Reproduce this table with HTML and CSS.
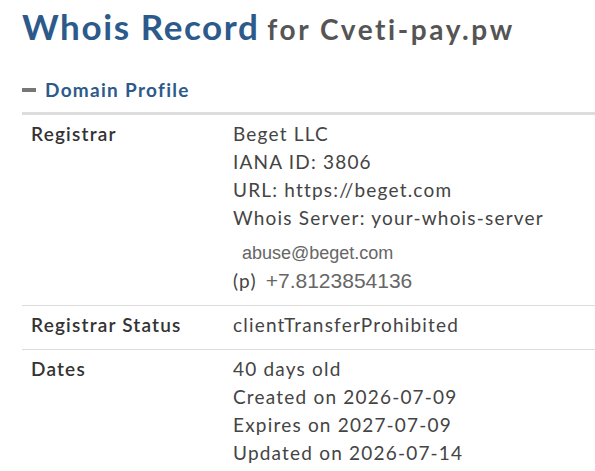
FILE: index.html
```html
<!DOCTYPE html>
<html>
<head>
<meta charset="utf-8">
<link rel="stylesheet" href="styles.css">
</head>
<body>
<div class="page">
  <h1 class="title"><span class="title-main">Whois Record</span> <span class="title-sub">for Cveti-pay.pw</span></h1>
  <div class="section-head"><span class="dash"></span><span class="section-name">Domain Profile</span></div>
  <div class="table">
    <div class="row">
      <div class="label">Registrar</div>
      <div class="value">
        <div class="line">Beget LLC</div>
        <div class="line">IANA ID: 3806</div>
        <div class="line">URL: https://beget.com</div>
        <div class="line">Whois Server: your-whois-server</div>
        <div class="line email">abuse@beget.com</div>
        <div class="line phone"><span class="ptag">(p)</span><span class="pnum">+7.8123854136</span></div>
      </div>
    </div>
    <div class="row">
      <div class="label">Registrar Status</div>
      <div class="value"><div class="line">clientTransferProhibited</div></div>
    </div>
    <div class="row">
      <div class="label">Dates</div>
      <div class="value">
        <div class="line">40 days old</div>
        <div class="line">Created on 2026-07-09</div>
        <div class="line">Expires on 2027-07-09</div>
        <div class="line">Updated on 2026-07-14</div>
      </div>
    </div>
  </div>
</div>
</body>
</html>
```

FILE: styles.css
```css
html, body {
  margin: 0;
  padding: 0;
  background: #fff;
}
body {
  font-family: Lato, "Open Sans", sans-serif;
  color: #444;
}
.page {
  padding: 5px 0 0 22px;
}
.title {
  margin: 0;
  font-weight: 700;
  line-height: 42px;
  white-space: nowrap;
}
.title-main {
  font-size: 35px;
  letter-spacing: 1.6px;
  color: #2c5a8b;
}
.title-sub {
  font-size: 28px;
  letter-spacing: 2.6px;
  color: #555;
}
.section-head {
  display: flex;
  align-items: center;
  gap: 9px;
  margin-top: 25px;
  height: 28px;
}
.dash {
  display: block;
  width: 14px;
  height: 4px;
  background: #777;
  margin-top: 1px;
}
.section-name {
  font-size: 19px;
  font-weight: 700;
  letter-spacing: 1.3px;
  color: #2c5a8b;
}
.table {
  margin-top: 9px;
  border-top: 3px solid #ddd;
}
.row {
  display: flex;
  padding: 5px 0 10px 9px;
  border-bottom: 1px solid #ddd;
}
.row:last-child {
  border-bottom: none;
}
.label {
  width: 202px;
  flex: none;
  font-size: 19px;
  line-height: 28px;
  font-weight: 600;
  letter-spacing: 1.2px;
  color: #333;
}
.value {
  font-size: 19px;
  line-height: 28px;
  letter-spacing: 1.2px;
  color: #444;
}
.email {
  font-family: "Liberation Sans", Arial, sans-serif;
  font-size: 18px;
  letter-spacing: 0;
  color: #666;
  padding-left: 9px;
  margin-top: 7px;
}
.phone {
  display: flex;
  align-items: baseline;
  gap: 9px;
}
.pnum {
  font-family: "Liberation Sans", Arial, sans-serif;
  font-size: 21px;
  letter-spacing: 0;
  color: #666;
}
```
